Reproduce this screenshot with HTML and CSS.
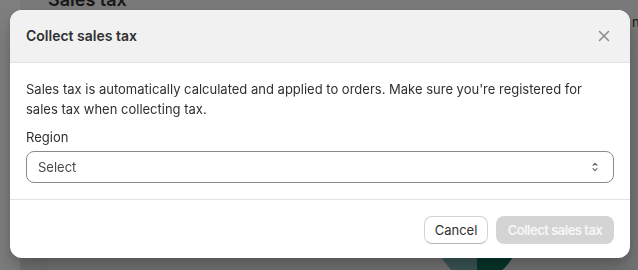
FILE: index.html
```html
<!DOCTYPE html>
<html lang="en">
<head>
<meta charset="utf-8">
<title>Collect sales tax</title>
<link rel="stylesheet" href="styles.css">
</head>
<body>
<div class="page">
  <aside class="side"></aside>
  <main class="main">
    <div class="topbar">
      <h1 class="page-title">Sales tax</h1>
      <span class="top-link">n</span>
    </div>
    <div class="content">
      <div class="rail"></div>
      <section class="panel">
        <div class="chart"></div>
      </section>
    </div>
  </main>
</div>

<div class="backdrop"></div>

<div class="modal" role="dialog" aria-labelledby="modal-title">
  <header class="modal-header">
    <h2 id="modal-title" class="modal-title">Collect sales tax</h2>
    <button class="close-btn" aria-label="Close">
      <svg viewBox="0 0 20 20" width="20" height="20"><path d="M5.5 5.5l9 9M14.5 5.5l-9 9" stroke="#8a8a8a" stroke-width="1.5" stroke-linecap="round" fill="none"/></svg>
    </button>
  </header>
  <div class="modal-body">
    <p class="intro">Sales tax is automatically calculated and applied to orders. Make sure you're registered for sales tax when collecting tax.</p>
    <label class="field-label" for="region">Region</label>
    <div class="select" id="region">
      <span class="select-value">Select</span>
      <svg class="select-icon" viewBox="0 0 20 20" width="16" height="16"><path d="M7.5 8l2.5-2.5 2.5 2.5M7.5 12l2.5 2.5 2.5-2.5" stroke="#5a5a5a" stroke-width="1.3" stroke-linecap="round" stroke-linejoin="round" fill="none"/></svg>
    </div>
  </div>
  <footer class="modal-footer">
    <button class="btn btn-secondary">Cancel</button>
    <button class="btn btn-primary" disabled>Collect sales tax</button>
  </footer>
</div>
</body>
</html>
```
FILE: styles.css
```css
* { box-sizing: border-box; }
html, body { margin: 0; padding: 0; }
body {
  width: 638px;
  height: 270px;
  overflow: hidden;
  font-family: Inter, "Noto Sans", "Liberation Sans", sans-serif;
  background: #f1f1f1;
}
.page {
  display: flex;
  height: 270px;
}
.side {
  width: 20px;
  background: #fdfdfd;
}
.main {
  flex: 1;
  background: #f2f2f2;
  display: flex;
  flex-direction: column;
}
.topbar {
  display: flex;
  justify-content: space-between;
  align-items: flex-start;
  padding: 0 0 0 28px;
  height: 72px;
}
.page-title {
  margin: -11px 0 0;
  font-size: 18px;
  font-weight: 600;
  color: #303030;
  line-height: 22px;
}
.top-link {
  margin-top: 14px;
  font-size: 13px;
  line-height: 16px;
  color: #303030;
  width: 6px;
  overflow: hidden;
}
.content {
  flex: 1;
  display: flex;
}
.rail {
  width: 28px;
  background: #e6e6e6;
}
.panel {
  flex: 1;
  background: #ebebeb;
  display: flex;
  justify-content: flex-start;
  align-items: flex-start;
  padding: 169px 0 0 389px;
}
.chart {
  flex: none;
  width: 80px;
  height: 80px;
  border-radius: 50%;
  background: linear-gradient(90deg, #78aeae 0 50%, #0e6e54 50% 100%);
}
.backdrop {
  position: fixed;
  inset: 0;
  background: rgba(0, 0, 0, 0.5);
}
.modal {
  position: fixed;
  top: 10px;
  left: 10px;
  width: 620px;
  background: #ffffff;
  border-radius: 12px;
  overflow: hidden;
  box-shadow: 0 16px 24px rgba(0, 0, 0, 0.18), 0 4px 8px rgba(0, 0, 0, 0.12);
  color: #303030;
}
.modal-header {
  display: flex;
  align-items: center;
  justify-content: space-between;
  background: #f1f1f1;
  border-bottom: 1px solid #e3e3e3;
  padding: 0 16px;
  height: 53px;
}
.modal-title {
  margin: 0;
  font-size: 14px;
  font-weight: 600;
  line-height: 20px;
  color: #303030;
}
.close-btn {
  border: 0;
  background: transparent;
  padding: 0;
  width: 20px;
  height: 20px;
  display: flex;
  align-items: center;
  justify-content: center;
}
.modal-body {
  padding: 16px;
  border-bottom: 1px solid #e3e3e3;
  display: flex;
  flex-direction: column;
}
.intro {
  margin: 0 0 8px;
  font-size: 13px;
  line-height: 20px;
  color: #303030;
}
.field-label {
  font-size: 13px;
  line-height: 20px;
  color: #303030;
  margin-bottom: 4px;
}
.select {
  height: 32px;
  border: 1px solid #8a8a8a;
  border-radius: 8px;
  display: flex;
  align-items: center;
  justify-content: space-between;
  padding: 0 10px 0 11px;
  font-size: 13px;
  color: #4a4a4a;
}
.select-icon { display: block; }
.modal-footer {
  display: flex;
  justify-content: flex-end;
  gap: 8px;
  padding: 16px 16px 14px;
}
.btn {
  font-family: inherit;
  font-size: 13px;
  height: 28px;
  border-radius: 8px;
  padding: 0;
  line-height: 26px;
  white-space: nowrap;
  text-align: center;
}
.btn-secondary {
  background: #ffffff;
  border: 1px solid #d4d4d4;
  border-bottom-color: #b5b5b5;
  color: #303030;
  width: 64px;
  font-weight: 400;
}
.btn-primary {
  background: #d4d4d4;
  border: 0;
  line-height: 28px;
  color: #f7f7f7;
  font-weight: 600;
  width: 118px;
  letter-spacing: -0.5px;
}
```
